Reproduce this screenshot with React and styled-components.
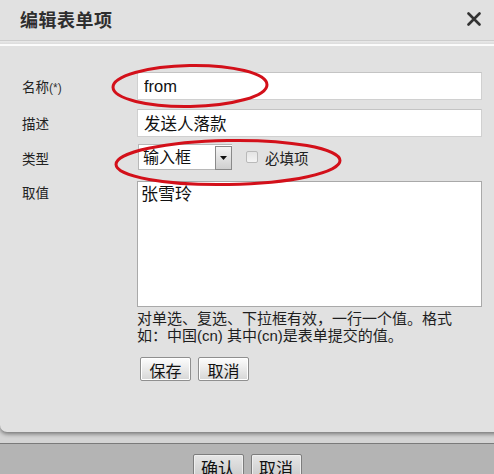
import React from 'react';
import styled, {createGlobalStyle} from "styled-components";

const GlobalStyle = createGlobalStyle`
  html, body {
    margin: 0;
    padding: 0;
    background: #b4b4b4;
  }
  * {
    box-sizing: border-box;
  }
`

const cjk = `"Liberation Sans", "Noto Sans CJK SC", sans-serif`

export default function App(){
    return (
        <>
            <GlobalStyle />
            <Page>
                <Modal>
                    <Header>
                        <Title>编辑表单项</Title>
                        <CloseIcon width="14" height="14" viewBox="0 0 14 14">
                            <path d="M1.5 1.5 L12.5 12.5 M12.5 1.5 L1.5 12.5" stroke="#333" strokeWidth="2.6" strokeLinecap="round"/>
                        </CloseIcon>
                    </Header>
                    <Divider />
                    <Form>
                        <Label>名称<small>(*)</small></Label>
                        <TextInput defaultValue="from" />

                        <Label>描述</Label>
                        <TextInput defaultValue="发送人落款" />

                        <Label>类型</Label>
                        <TypeRow>
                            <Select>
                                <SelectText>输入框</SelectText>
                                <SelectButton>
                                    <svg width="7" height="4" viewBox="0 0 7 4">
                                        <path d="M0 0 H7 L3.5 4 Z" fill="#111"/>
                                    </svg>
                                </SelectButton>
                            </Select>
                            <Check>
                                <Box />
                                必填项
                            </Check>
                        </TypeRow>

                        <Label $top>取值</Label>
                        <ValueCell>
                            <TextArea defaultValue="张雪玲" />
                            <Hint>对单选、复选、下拉框有效，一行一个值。格式如：中国(cn) 其中(cn)是表单提交的值。</Hint>
                            <Buttons>
                                <Button>保存</Button>
                                <Button>取消</Button>
                            </Buttons>
                        </ValueCell>
                    </Form>
                    <Marks width="494" height="200" viewBox="0 0 494 200">
                        <ellipse cx="190" cy="86" rx="77" ry="20.5" fill="none" stroke="#d3101a" strokeWidth="3" transform="rotate(-1 190 86)"/>
                        <ellipse cx="228" cy="162.5" rx="112" ry="22" fill="none" stroke="#d3101a" strokeWidth="3" transform="rotate(-1 228 162)"/>
                    </Marks>
                </Modal>
                <Gap />
                <Footer>
                    <FooterButton>确认</FooterButton>
                    <FooterButton>取消</FooterButton>
                </Footer>
            </Page>
        </>
    );
}

const Page = styled.div`
  width: 494px;
  height: 474px;
  overflow: hidden;
  display: flex;
  flex-direction: column;
  background: #d4d4d4;
  font-family: ${cjk};
`
const Modal = styled.div`
  position: relative;
  height: 432px;
  flex-shrink: 0;
  margin-right: -10px;
  background: #e1e1e1;
  border-bottom-left-radius: 7px;
  box-shadow: 0 2px 4px rgba(0, 0, 0, 0.45);
`
const Header = styled.div`
  height: 40px;
  display: flex;
  align-items: center;
  justify-content: space-between;
  padding: 0 23px 2px 20px;
`
const Title = styled.div`
  font-size: 18px;
  font-weight: bold;
  color: #2e2e2e;
  letter-spacing: 0.5px;
`
const CloseIcon = styled.svg`
  display: block;
`
const Divider = styled.div`
  height: 6px;
  border-top: 1px solid #cdcdcd;
  border-bottom: 2px solid #fbfbfb;
  background: linear-gradient(#e9e9e9, #dcdcdc);
`
const Form = styled.div`
  display: grid;
  grid-template-columns: 115px 345px;
  align-items: center;
  padding: 26px 0 0 22px;
  row-gap: 9px;
  & > :nth-child(6) {
    margin-top: -2px;
  }
  & > :nth-child(8) {
    margin-top: 2px;
  }
`
const Label = styled.div`
  font-size: 13.5px;
  color: #222;
  align-self: ${p => p.$top ? "start" : "center"};
  padding-top: ${p => p.$top ? "3px" : "0"};
  small {
    font-size: 12px;
    color: #333;
  }
`
const TextInput = styled.input`
  width: 345px;
  height: 28px;
  border: 1px solid #d0d0d0;
  border-top-color: #c4c4c4;
  background: #fff;
  padding: 0 6px;
  font-family: ${cjk};
  font-size: 16.5px;
  color: #111;
  outline: none;
`
const TypeRow = styled.div`
  display: flex;
  align-items: center;
  height: 26px;
  padding-left: 1px;
`
const Select = styled.div`
  width: 94px;
  height: 26px;
  display: flex;
  background: #fff;
  border: 1px solid #b8b8b8;
  border-right: none;
`
const SelectText = styled.div`
  flex: 1;
  font-size: 16px;
  line-height: 25px;
  padding-left: 4px;
  color: #111;
`
const SelectButton = styled.div`
  width: 17px;
  margin: 1px 0 -1px;
  display: flex;
  align-items: center;
  justify-content: center;
  border: 1px solid #8a8a8a;
  background: linear-gradient(#f4f4f4, #cfcfcf);
`
const Check = styled.label`
  display: flex;
  align-items: center;
  gap: 7px;
  margin-left: 14px;
  font-size: 14.5px;
  color: #222;
`
const Box = styled.span`
  width: 12px;
  height: 12px;
  border: 1px solid #b9b9b9;
  border-radius: 2px;
  background: linear-gradient(#e4e4e4, #f4f4f4);
`
const ValueCell = styled.div`
  display: flex;
  flex-direction: column;
`
const TextArea = styled.textarea`
  width: 345px;
  height: 126px;
  resize: none;
  border: 1px solid #a9a9a9;
  background: #fff;
  padding: 2px 3px;
  font-family: ${cjk};
  font-size: 17px;
  line-height: 22px;
  color: #111;
  outline: none;
`
const Hint = styled.div`
  margin-top: 3px;
  width: 330px;
  font-size: 15px;
  line-height: 17px;
  color: #1e1e1e;
`
const Buttons = styled.div`
  display: flex;
  gap: 7px;
  margin: 13px 0 0 3px;
`
const Button = styled.button`
  width: 51px;
  height: 24px;
  padding: 0;
  border: 1px solid #8f8f8f;
  border-radius: 2px;
  background: linear-gradient(#fdfdfd, #e6e6e6 60%, #d6d6d6);
  box-shadow: inset 0 0 0 1px #fff;
  font-family: ${cjk};
  font-size: 16px;
  color: #111;
`
const Marks = styled.svg`
  position: absolute;
  left: 0;
  top: 0;
  pointer-events: none;
`
const Gap = styled.div`
  height: 11px;
  flex-shrink: 0;
`
const Footer = styled.div`
  flex: 1;
  border-top: 1px solid #7a7a7a;
  background: #b4b4b4;
  display: flex;
  justify-content: center;
  gap: 7px;
  padding: 10px 0 0 0;
`
const FooterButton = styled.button`
  width: 51px;
  height: 26px;
  padding: 0;
  border: 1px solid #7d7d7d;
  border-radius: 2px;
  background: linear-gradient(#e6e6e6, #c9c9c9);
  box-shadow: inset 0 0 0 1px #eee;
  font-family: ${cjk};
  font-size: 17px;
  color: #111;
`
